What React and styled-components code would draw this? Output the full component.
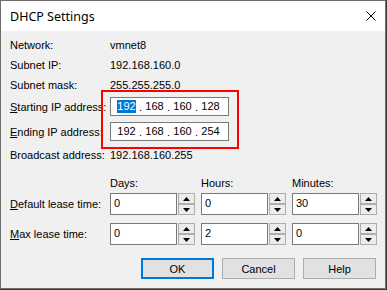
import React from 'react';
import styled, { createGlobalStyle } from 'styled-components';

const Global = createGlobalStyle`
  html, body { margin: 0; padding: 0; background: #3a3a3a; }
  body { width: 387px; height: 290px; overflow: hidden; }
`;

const Window = styled.div`
  position: relative;
  box-sizing: border-box;
  width: 386px;
  height: 289px;
  border: 1px solid #6e6e6e;
  background: #f0f0f0;
  display: flex;
  flex-direction: column;
  font-family: "Liberation Sans", Arial, sans-serif;
  font-size: 11px;
  color: #000;
`;

const TitleBar = styled.div`
  height: 30px;
  flex: none;
  background: #fff;
  display: flex;
  align-items: center;
  justify-content: space-between;
  padding-left: 9px;
  font-family: "Noto Sans", sans-serif;
  font-size: 12.5px;
`;

const CloseBtn = styled.div`
  width: 28px;
  height: 30px;
  display: flex;
  align-items: center;
  justify-content: center;
`;

const Body = styled.div`
  padding: 4px 9px 0 9px;
  display: flex;
  flex-direction: column;
`;

const Row = styled.div`
  display: grid;
  grid-template-columns: 100px auto;
  align-items: center;
  height: ${p => p.$h || 20}px;
  margin-top: ${p => p.$mt || 0}px;
`;

const U = styled.span`
  text-decoration: underline;
  text-underline-offset: 1px;
`;

const IpBox = styled.div`
  box-sizing: border-box;
  width: 119px;
  height: 19px;
  background: #fff;
  border: 1px solid #7a7a7a;
  display: flex;
  align-items: center;
  padding-left: 5px;
`;

const IpField = styled.span`
  width: 21px;
  display: flex;
  justify-content: center;
`;

const IpDot = styled.span`
  width: 7px;
  text-align: center;
`;

const Sel = styled.span`
  background: ${p => (p.$on ? '#0078d7' : 'transparent')};
  color: ${p => (p.$on ? '#fff' : '#000')};
  line-height: 13px;
`;

const LeaseGrid = styled.div`
  display: grid;
  grid-template-columns: 94px repeat(3, 85px);
  column-gap: 6px;
  align-items: center;
  height: ${p => p.$h}px;
  margin-top: ${p => p.$mt || 0}px;
`;

const Spin = styled.div`
  display: flex;
  gap: 1px;
  height: 22px;
`;

const Edit = styled.div`
  box-sizing: border-box;
  width: 67px;
  height: 22px;
  background: #fff;
  border: 1px solid #7a7a7a;
  padding: 3px 0 0 3px;
`;

const Arrows = styled.div`
  width: 17px;
  display: flex;
  flex-direction: column;
`;

const ArrowBtn = styled.div`
  box-sizing: border-box;
  flex: 1;
  border: 1px solid #adadad;
  background: #ececec;
  display: flex;
  align-items: center;
  justify-content: center;
`;

const Buttons = styled.div`
  display: flex;
  justify-content: flex-end;
  gap: 8px;
  margin-top: 13px;
`;

const Button = styled.div`
  box-sizing: border-box;
  width: 73px;
  height: 21px;
  background: #e1e1e1;
  border: ${p => (p.$def ? '2px solid #0078d7' : '1px solid #adadad')};
  display: flex;
  align-items: center;
  justify-content: center;
`;

const Highlight = styled.div`
  position: absolute;
  left: 100px;
  top: 89px;
  width: 138px;
  height: 59px;
  box-sizing: border-box;
  border: 2px solid #ff0000;
  pointer-events: none;
`;

const Tri = ({ up }) => (
  <svg width="7" height="4" viewBox="0 0 7 4">
    <polygon points={up ? '3.5,0 7,4 0,4' : '0,0 7,0 3.5,4'} fill="#000" />
  </svg>
);

const SpinBox = ({ value }) => (
  <Spin>
    <Edit>{value}</Edit>
    <Arrows>
      <ArrowBtn><Tri up /></ArrowBtn>
      <ArrowBtn><Tri /></ArrowBtn>
    </Arrows>
  </Spin>
);

const IpControl = ({ parts, selFirst }) => (
  <IpBox>
    {parts.map((p, i) => (
      <React.Fragment key={i}>
        {i > 0 && <IpDot>.</IpDot>}
        <IpField><Sel $on={selFirst && i === 0}>{p}</Sel></IpField>
      </React.Fragment>
    ))}
  </IpBox>
);

export default function App() {
  return (
    <>
      <Global />
      <Window>
        <TitleBar>
          <span>DHCP Settings</span>
          <CloseBtn>
            <svg width="10" height="10" viewBox="0 0 10 10">
              <path d="M0.5 0.5 L9.5 9.5 M9.5 0.5 L0.5 9.5" stroke="#000" strokeWidth="1" />
            </svg>
          </CloseBtn>
        </TitleBar>
        <Body>
          <Row><span>Network:</span><span>vmnet8</span></Row>
          <Row><span>Subnet IP:</span><span>192.168.160.0</span></Row>
          <Row><span>Subnet mask:</span><span>255.255.255.0</span></Row>
          <Row $h={21} $mt={1}>
            <span><U>S</U>tarting IP address:</span>
            <IpControl parts={['192', '168', '160', '128']} selFirst />
          </Row>
          <Row $h={21} $mt={4}>
            <span><U>E</U>nding IP address:</span>
            <IpControl parts={['192', '168', '160', '254']} />
          </Row>
          <Row $mt={3}><span>Broadcast address:</span><span>192.168.160.255</span></Row>
          <LeaseGrid $h={15} $mt={10}>
            <span />
            <span>Days:</span>
            <span>Hours:</span>
            <span>Minutes:</span>
          </LeaseGrid>
          <LeaseGrid $h={22} $mt={3}>
            <span><U>D</U>efault lease time:</span>
            <SpinBox value="0" />
            <SpinBox value="0" />
            <SpinBox value="30" />
          </LeaseGrid>
          <LeaseGrid $h={22} $mt={8}>
            <span><U>M</U>ax lease time:</span>
            <SpinBox value="0" />
            <SpinBox value="2" />
            <SpinBox value="0" />
          </LeaseGrid>
          <Buttons>
            <Button $def>OK</Button>
            <Button>Cancel</Button>
            <Button>Help</Button>
          </Buttons>
        </Body>
        <Highlight />
      </Window>
    </>
  );
}
